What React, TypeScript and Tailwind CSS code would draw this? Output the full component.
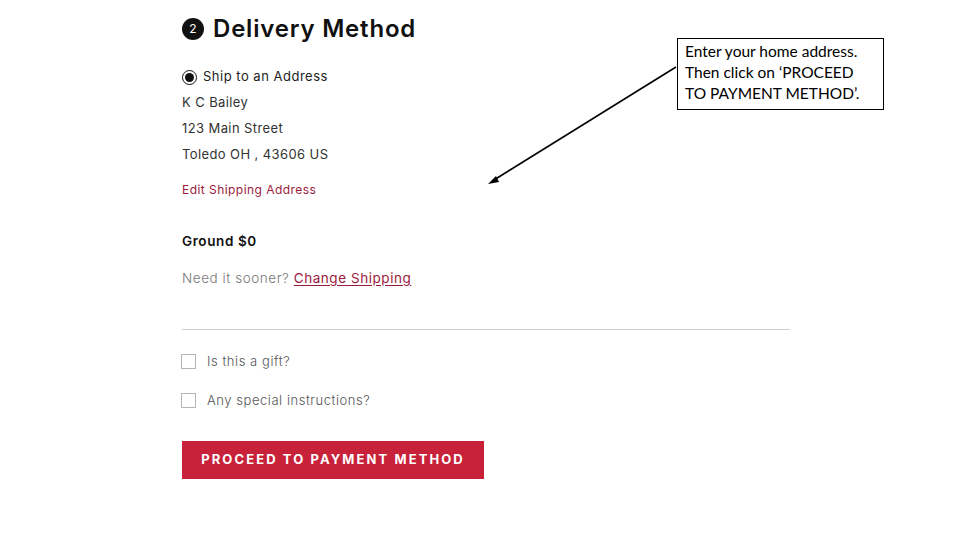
import React from 'react';

const font = { fontFamily: 'Inter, "Noto Sans", sans-serif' };

function Checkbox({ label }: { label: string }) {
  return (
    <label className="flex items-center gap-[11px] h-[15px]">
      <span className="w-[15px] h-[15px] border border-[#b5b5b5] bg-white shrink-0" />
      <span className="text-[13px] text-[#555] font-light tracking-[0.55px]">{label}</span>
    </label>
  );
}

export default function App() {
  return (
    <div className="relative w-[960px] h-[540px] bg-white overflow-hidden" style={font}>
      <div className="flex flex-col pl-[182px] pt-[17px] w-[790px]">
        {/* Heading */}
        <div className="flex items-center gap-[9px] h-[24px]">
          <span className="w-[22px] h-[22px] rounded-full bg-[#111] text-white text-[12px] flex items-center justify-center">2</span>
          <h1 className="text-[24px] font-semibold text-[#111] tracking-[0.8px] leading-none">Delivery Method</h1>
        </div>

        {/* Shipping option */}
        <div className="flex items-center gap-[6px] mt-[28px] h-[16px]">
          <span className="w-[15px] h-[15px] rounded-full border-[1.5px] border-[#111] flex items-center justify-center">
            <span className="w-[9px] h-[9px] rounded-full bg-[#111]" />
          </span>
          <span className="text-[13px] text-[#222] tracking-[0.5px]">Ship to an Address</span>
        </div>

        <div className="flex flex-col text-[13px] text-[#333] leading-[26px] mt-[4px] tracking-[0.4px]">
          <span>K C Bailey</span>
          <span>123 Main Street</span>
          <span>Toledo OH , 43606 US</span>
        </div>

        <a className="text-[12px] text-[#9b1b3c] mt-[15px] leading-[16px] tracking-[0.45px]">Edit Shipping Address</a>

        <div className="text-[13.5px] font-semibold text-[#111] mt-[35px] leading-[16px] tracking-[0.6px]">Ground $0</div>

        <div className="text-[13.5px] text-[#777] font-light mt-[21px] leading-[16px] tracking-[0.55px]">
          Need it sooner? <a className="text-[#9b1b3c] underline underline-offset-2 font-normal">Change Shipping</a>
        </div>

        <div className="h-px bg-[#cfcfcf] mt-[43px] w-[608px]" />

        <div className="flex flex-col gap-[24px] mt-[24px] -ml-px">
          <Checkbox label="Is this a gift?" />
          <Checkbox label="Any special instructions?" />
        </div>

        <button className="mt-[33px] w-[302px] h-[38px] bg-[#c8213a] text-white text-[13px] font-bold tracking-[2.1px] uppercase">
          Proceed to Payment Method
        </button>
      </div>

      {/* Annotation callout */}
      <div
        className="absolute left-[677px] top-[38px] w-[207px] h-[72px] border border-black bg-white px-[7px] pt-[2px] text-[15.5px] leading-[21px] text-black whitespace-nowrap"
        style={{ fontFamily: 'Lato, "Open Sans", sans-serif' }}
      >
        Enter your home address.<br />
        Then click on ‘PROCEED<br />
        TO PAYMENT METHOD’.
      </div>
      <svg className="absolute left-0 top-0" width="960" height="540">
        <line x1="676" y1="67" x2="494" y2="180" stroke="#000" strokeWidth="1.6" />
        <polygon points="488,184 496,176 499,182" fill="#000" />
      </svg>
    </div>
  );
}
